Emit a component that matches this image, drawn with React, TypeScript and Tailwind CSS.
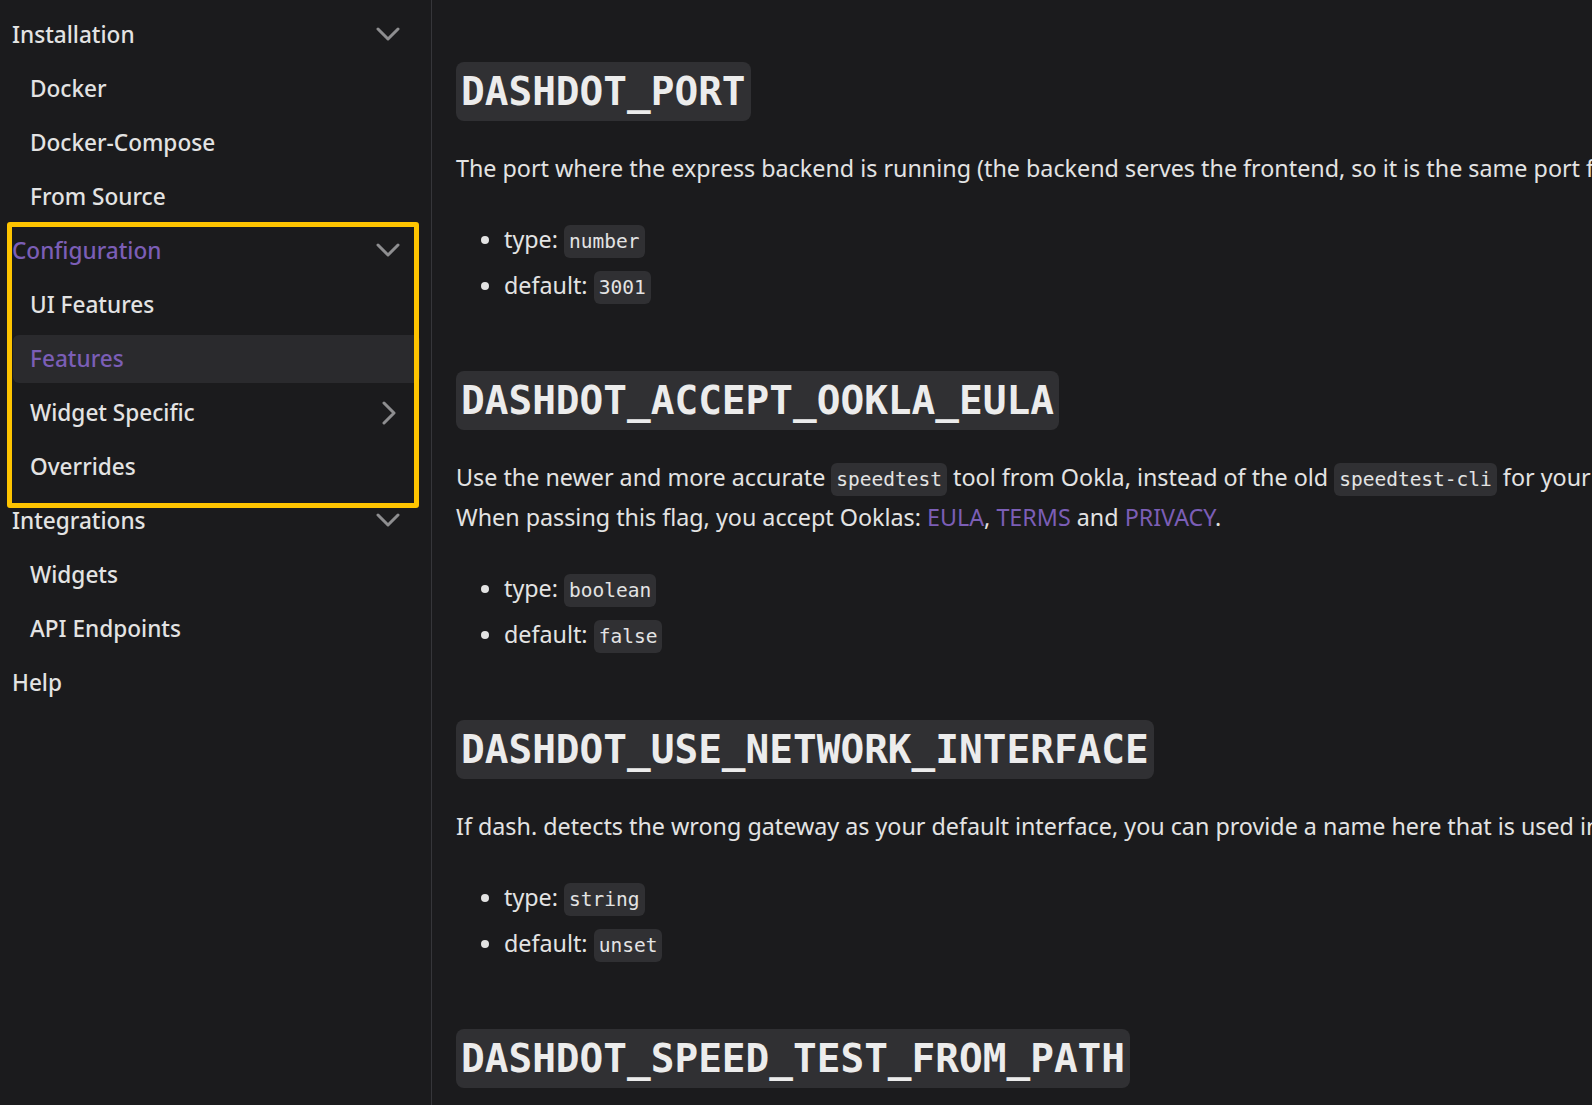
import React from "react";

const ChevronDown = () => (
  <svg width="26" height="16" viewBox="0 0 26 16" fill="none">
    <polyline points="3,2 13,12 23,2" stroke="#8e8e90" strokeWidth="3" strokeLinecap="round" strokeLinejoin="round" />
  </svg>
);

const ChevronRight = () => (
  <svg width="18" height="24" viewBox="0 0 18 24" fill="none">
    <polyline points="4,2 14,12 4,22" stroke="#8e8e90" strokeWidth="3" strokeLinecap="round" strokeLinejoin="round" />
  </svg>
);

const Category = ({ label, active, children }: { label: string; active?: boolean; children?: React.ReactNode }) => (
  <li>
    <div className="flex h-12 items-center justify-between pl-[12px] pr-[19px]">
      <span className={active ? "text-[#7b5eb6]" : ""}>{label}</span>
      {children && <ChevronDown />}
    </div>
    {children && <ul className="mt-[6px] space-y-[6px] pl-[13px]">{children}</ul>}
  </li>
);

const Item = ({ label, active, arrow }: { label: string; active?: boolean; arrow?: boolean }) => (
  <li
    className={
      "flex h-12 items-center justify-between rounded-md pl-[17px] pr-[22px] " +
      (active ? "bg-[#2a2a2d] text-[#7b5eb6]" : "")
    }
  >
    <span>{label}</span>
    {arrow && <ChevronRight />}
  </li>
);

const Code = ({ children }: { children: React.ReactNode }) => (
  <code className="rounded-md bg-[#303033] px-[5px] py-[5px] font-['DejaVu_Sans_Mono',monospace] text-[19.5px] leading-none text-[#e3e3e3]">
    {children}
  </code>
);

const Heading = ({ children }: { children: React.ReactNode }) => (
  <h2 className="flex">
    <code className="inline-block h-[59px] rounded-lg bg-[#303033] px-[5px] font-['DejaVu_Sans_Mono',monospace] text-[39.4px] font-bold leading-[59px] text-[#ececec]">
      {children}
    </code>
  </h2>
);

const Props = ({ type, def }: { type: string; def: string }) => (
  <ul className="mt-[31px] list-disc space-y-[6px] pl-[48px] leading-[40px]">
    <li>
      type: <Code>{type}</Code>
    </li>
    <li>
      default: <Code>{def}</Code>
    </li>
  </ul>
);

const A = ({ children }: { children: React.ReactNode }) => <a className="text-[#7b5eb6]">{children}</a>;

export default function App() {
  return (
    <div className="relative flex h-[1105px] w-full overflow-hidden bg-[#1b1b1d] font-['Noto_Sans',sans-serif] text-[23.3px] text-[#e3e3e3]">
      <aside className="w-[432px] shrink-0 border-r border-[#36363a] pr-[11px] pt-[11px] text-[22.6px] font-medium">
        <ul className="space-y-[6px]">
          <Category label="Installation">
            <Item label="Docker" />
            <Item label="Docker-Compose" />
            <Item label="From Source" />
          </Category>
          <Category label="Configuration" active>
            <Item label="UI Features" />
            <Item label="Features" active />
            <Item label="Widget Specific" arrow />
            <Item label="Overrides" />
          </Category>
          <Category label="Integrations">
            <Item label="Widgets" />
            <Item label="API Endpoints" />
          </Category>
          <Category label="Help" />
        </ul>
      </aside>

      {/* highlight annotation */}
      <div className="pointer-events-none absolute left-[7px] top-[222px] h-[286px] w-[412px] rounded-[3px] border-[5px] border-[#fec400]" />

      <main className="min-w-0 flex-1 overflow-hidden pl-[24px] pt-[62px]">
        <Heading>DASHDOT_PORT</Heading>
        <p className="mt-[27px] whitespace-nowrap leading-[40px]">
          The port where the express backend is running (the backend serves the frontend, so it is the same port for both).
        </p>
        <Props type="number" def="3001" />

        <div className="mt-[66px]">
          <Heading>DASHDOT_ACCEPT_OOKLA_EULA</Heading>
        </div>
        <p className="mt-[27px] whitespace-nowrap leading-[40px]">
          Use the newer and more accurate <Code>speedtest</Code> tool from Ookla, instead of the old <Code>speedtest-cli</Code> for your speedtests.
          <br />
          When passing this flag, you accept Ooklas: <A>EULA</A>, <A>TERMS</A> and <A>PRIVACY</A>.
        </p>
        <Props type="boolean" def="false" />

        <div className="mt-[66px]">
          <Heading>DASHDOT_USE_NETWORK_INTERFACE</Heading>
        </div>
        <p className="mt-[27px] whitespace-nowrap leading-[40px]">
          If dash. detects the wrong gateway as your default interface, you can provide a name here that is used instead.
        </p>
        <Props type="string" def="unset" />

        <div className="mt-[66px]">
          <Heading>DASHDOT_SPEED_TEST_FROM_PATH</Heading>
        </div>
      </main>
    </div>
  );
}
